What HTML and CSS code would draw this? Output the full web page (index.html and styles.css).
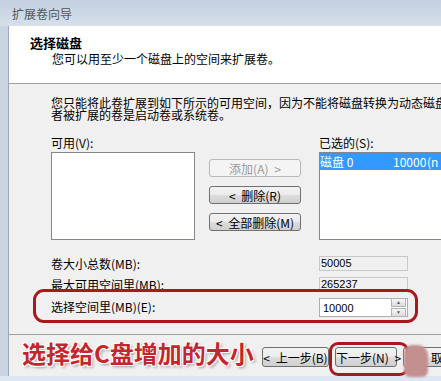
FILE: index.html
```html
<!DOCTYPE html>
<html lang="zh-CN">
<head>
  <meta charset="UTF-8">
  <title>扩展卷向导</title>
  <link rel="stylesheet" href="styles.css">
</head>
<body>
  <div class="window">
    <!-- Title bar -->
    <div class="titlebar">扩展卷向导</div>

    <div class="client">
      <!-- White wizard header -->
      <div class="header">
        <div class="header-title">选择磁盘</div>
        <div class="header-sub">您可以用至少一个磁盘上的空间来扩展卷。</div>
      </div>

      <div class="content">
        <p class="desc">您只能将此卷扩展到如下所示的可用空间，因为不能将磁盘转换为动态磁盘<br>者被扩展的卷是启动卷或系统卷。</p>

        <!-- Available / selected disk lists -->
        <div class="lists">
          <div class="list-col">
            <div class="list-label">可用(V):</div>
            <div class="listbox"></div>
          </div>
          <div class="btn-col">
            <button class="btn" disabled>添加(A) &gt;</button>
            <button class="btn">&lt; 删除(R)</button>
            <button class="btn">&lt; 全部删除(M)</button>
          </div>
          <div class="list-col">
            <div class="list-label">已选的(S):</div>
            <div class="listbox">
              <div class="list-row selected">
                <span class="cell-disk">磁盘 0</span>
                <span class="cell-size">10000</span>
                <span>(n</span>
              </div>
            </div>
          </div>
        </div>

        <!-- Size fields -->
        <div class="info">
          <div class="info-label">卷大小总数(MB):</div>
          <div class="field readonly">50005</div>
          <div class="info-label">最大可用空间里(MB):</div>
          <div class="field readonly">265237</div>
          <div class="info-label">选择空间里(MB)(E):</div>
          <div class="field spin">
            <span class="spin-value">10000</span>
            <span class="spin-btns">
              <span class="spin-btn">&#9650;</span>
              <span class="spin-btn">&#9660;</span>
            </span>
          </div>
        </div>
      </div>

      <!-- Wizard navigation -->
      <div class="footer">
        <button class="btn nav">&lt; 上一步(B)</button>
        <button class="btn nav">下一步(N) &gt;</button>
        <button class="btn nav">取消</button>
      </div>
    </div>
    <div class="bottom-strip"></div>

    <!-- Red annotations drawn over the screenshot -->
    <div class="mark mark-field"></div>
    <div class="mark mark-next"></div>
    <div class="stamp"></div>
    <div class="caption">选择给C盘增加的大小</div>
  </div>
</body>
</html>
```

FILE: styles.css
```css
/* Reset and full window */
html, body {
  margin: 0;
  padding: 0;
  width: 100%;
  height: 100%;
  overflow: hidden;
}
body {
  background: #c9d5e2;
  font-family: "Noto Sans CJK SC", "Liberation Sans", sans-serif;
  font-size: 12px;
  color: #000;
}
.window {
  position: relative;
  width: 441px;
  height: 381px;
  overflow: hidden;
}
/* Title bar */
.titlebar {
  height: 26px;
  line-height: 28px;
  padding-left: 12px;
  color: #555;
  font-size: 12px;
  background: linear-gradient(#c2d0e0, #d6e0eb);
}
/* Dialog client area */
.client {
  margin-left: 8px;
  border-left: 1px solid #9aa8b8;
  background: #f0f0f0;
  width: 440px;
}
.header {
  background: #fff;
  border-bottom: 1px solid #a0a0a0;
  box-sizing: border-box;
  padding: 9px 0 0 21px;
  height: 58px;
}
.header-title {
  font-weight: bold;
  line-height: 16px;
  font-size: 13px;
}
.header-sub {
  padding-left: 22px;
  line-height: 16px;
}
.content {
  padding: 13px 0 0 42px;
}
.desc {
  margin: 0;
  line-height: 12px;
  white-space: nowrap;
}
/* Lists */
.lists {
  margin-top: 14px;
  display: grid;
  grid-template-columns: 144px 92px 130px;
  column-gap: 14px;
}
.lists .list-col:last-child {
  margin-left: 4px;
}
.list-label {
  height: 17px;
  line-height: 15px;
}
.listbox {
  height: 88px;
  background: #fff;
  border: 1px solid #828790;
  box-sizing: border-box;
  overflow: hidden;
}
.list-row {
  display: flex;
  height: 17px;
  line-height: 17px;
  white-space: nowrap;
}
.list-row.selected {
  background: #3399ff;
  color: #fff;
}
.cell-disk {
  width: 73px;
  flex: none;
}
.cell-size {
  width: 34px;
  flex: none;
}
.btn-col {
  display: flex;
  flex-direction: column;
  gap: 9px;
  padding-top: 24px;
}
/* Win7 style push buttons */
.btn {
  height: 18px;
  padding: 0;
  font-family: inherit;
  font-size: 12px;
  color: #000;
  border: 1px solid #707070;
  border-radius: 3px;
  background: linear-gradient(#f2f2f2 0%, #ebebeb 50%, #dddddd 51%, #cfcfcf 100%);
  white-space: nowrap;
  word-spacing: 3px;
}
.btn:disabled {
  color: #9a9a9a;
  border-color: #b5b9bc;
  background: #f4f4f4;
}
/* Size fields */
.info {
  margin-top: 16px;
  display: grid;
  grid-template-columns: 268px 89px;
  grid-template-rows: 15px 15px 19px;
  row-gap: 6px;
}
.info-label {
  line-height: 15px;
}
.info-label:nth-last-child(2) {
  line-height: 19px;
  margin-top: -1px;
}
.field {
  box-sizing: border-box;
  font-family: "Liberation Sans", sans-serif;
  font-size: 11px;
  padding-left: 1px;
}
.field.readonly {
  border: 1px solid #c9c9c9;
  background: #f0f0f0;
  line-height: 13px;
}
.field.spin {
  display: flex;
  justify-content: space-between;
  align-items: center;
  border: 1px solid #abadb3;
  background: #fff;
  padding: 0 1px 0 3px;
}
.spin-btns {
  display: flex;
  flex-direction: column;
  gap: 1px;
}
.spin-btn {
  width: 13px;
  height: 7px;
  border: 1px solid #b3b3b3;
  background: linear-gradient(#f6f6f6, #dcdcdc);
  font-size: 5px;
  line-height: 7px;
  text-align: center;
  color: #4d6185;
}
/* Footer with navigation buttons */
.footer {
  margin-top: 17px;
  border-top: 1px solid #a0a0a0;
  height: 42px;
  box-sizing: border-box;
  padding: 12px 0 0 253px;
  display: flex;
  gap: 6px;
  align-items: flex-start;
}
.btn.nav {
  height: 20px;
  flex: none;
}
.btn.nav:nth-child(1) { width: 67px; }
.btn.nav:nth-child(2) { width: 62px; }
.btn.nav:nth-child(3) { width: 80px; }
.bottom-strip {
  height: 5px;
  background: #dce7f2;
}
/* Annotations */
.mark {
  position: absolute;
  border: 3px solid #a8191e;
  box-sizing: border-box;
}
.mark-field {
  left: 33px;
  top: 289px;
  width: 385px;
  height: 34px;
  border-radius: 11px;
}
.mark-next {
  left: 329px;
  top: 342px;
  width: 80px;
  height: 34px;
  border-radius: 9px;
}
.stamp {
  position: absolute;
  left: 404px;
  top: 345px;
  width: 24px;
  height: 32px;
  border-radius: 8px 10px 6px 6px;
  background: #c38f8f;
  filter: blur(1px);
}
.caption {
  position: absolute;
  left: 22px;
  top: 337px;
  font-size: 24px;
  line-height: 32px;
  font-weight: bold;
  color: #c3262e;
  white-space: nowrap;
  text-shadow: 1px 1px 0 #fff, -1px -1px 0 #fff, 1px -1px 0 #fff, -1px 1px 0 #fff, 2px 2px 3px rgba(0, 0, 0, 0.35);
}
```
